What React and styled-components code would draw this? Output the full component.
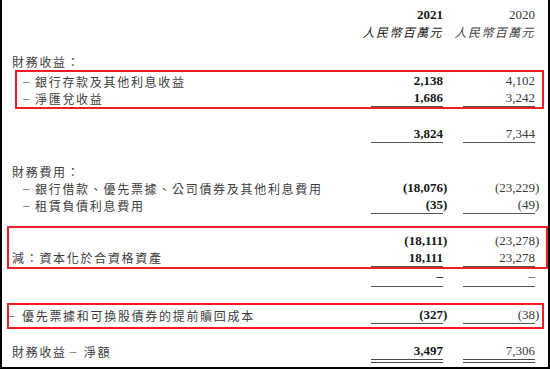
import React from 'react'
import styled, { createGlobalStyle } from 'styled-components'

const GlobalStyle = createGlobalStyle`
  body {
    margin: 0;
    background: #fff;
  }
`

const Page = styled.div`
  width: 550px;
  height: 369px;
  box-sizing: border-box;
  border: 2px solid #000;
  border-top: none;
  padding-top: 6px;
  background: #fff;
  overflow: hidden;
`

const Row = styled.div`
  display: grid;
  grid-template-columns: 1fr 72px 72px;
  column-gap: 20px;
  align-items: start;
  padding: 0 13px 0 ${p => p.$indent ?? 10}px;
  margin-top: ${p => p.$mt || 0}px;
  line-height: ${p => p.$h || 17}px;
`

const Label = styled.div`
  font-family: "Noto Sans CJK TC", sans-serif;
  font-size: 12px;
  letter-spacing: 1.7px;
  color: #3c3c3c;
  white-space: nowrap;
`

const Dash = styled.span`
  display: inline-block;
  width: ${p => p.$w || 13}px;
  padding-left: ${p => p.$pl || 0}px;
  box-sizing: border-box;
  vertical-align: 2px;
  font-family: "Liberation Serif", serif;
  font-size: 13px;
  letter-spacing: 0;
  color: #555;
`

const Cell = styled.div`
  display: flex;
  justify-content: flex-end;
  white-space: nowrap;
  font-family: "Liberation Serif", serif;
  font-size: 13px;
  font-weight: ${p => (p.$bold ? 700 : 400)};
  color: ${p => (p.$bold ? '#161616' : '#3a3a3a')};
  padding-bottom: ${p => p.$pb || 0}px;
  border-bottom: ${p =>
    p.$line === 'double' ? '4px double #4a4a4a' : p.$line ? '1px solid #555' : 'none'};
`

const Unit = styled.span`
  font-family: "Noto Sans CJK TC", sans-serif;
  font-size: 12px;
  font-style: italic;
  letter-spacing: 1.4px;
  color: ${p => (p.$bold ? '#1a1a1a' : '#444')};
`

const Value = styled.span`
  margin-right: ${p => (p.$paren ? '-4.3px' : '0')};
`

const Highlight = styled.div`
  position: relative;
  margin-top: ${p => p.$mt || 0}px;
  padding: ${p => p.$pt}px 0 ${p => p.$pb}px;

  &::after {
    content: '';
    position: absolute;
    top: 0;
    bottom: 0;
    left: ${p => p.$l}px;
    right: ${p => p.$r}px;
    border: 2px solid #f01d24;
    pointer-events: none;
  }
`

const Num = ({ v, bold, line, pb }) => (
  <Cell $bold={bold} $line={line} $pb={pb}>
    <Value $paren={v.startsWith('(')}>{v}</Value>
  </Cell>
)

const Figures = ({ a, b, line, pb }) => (
  <>
    <Num v={a} bold line={line} pb={pb} />
    <Num v={b} line={line} pb={pb} />
  </>
)

export default function App() {
  return (
    <>
      <GlobalStyle />
      <Page>
        <Row>
          <div />
          <Cell $bold>2021</Cell>
          <Cell>2020</Cell>
        </Row>
        <Row>
          <div />
          <Cell><Unit $bold>人民幣百萬元</Unit></Cell>
          <Cell><Unit>人民幣百萬元</Unit></Cell>
        </Row>

        <Row $mt={13}>
          <Label>財務收益：</Label>
        </Row>
        <Highlight $pt={2} $pb={2} $l={13} $r={4}>
          <Row $indent={20}>
            <Label><Dash $pl={1}>–</Dash>銀行存款及其他利息收益</Label>
            <Figures a="2,138" b="4,102" />
          </Row>
          <Row $indent={20} $h={16}>
            <Label><Dash $pl={1}>–</Dash>淨匯兌收益</Label>
            <Figures a="1,686" b="3,242" line />
          </Row>
        </Highlight>
        <Row $mt={16}>
          <div />
          <Figures a="3,824" b="7,344" line />
        </Row>

        <Row $mt={20}>
          <Label>財務費用：</Label>
        </Row>
        <Row $indent={20} $h={16}>
          <Label><Dash $pl={1}>–</Dash>銀行借款、優先票據、公司債券及其他利息費用</Label>
          <Figures a="(18,076)" b="(23,229)" />
        </Row>
        <Row $indent={20} $h={16}>
          <Label><Dash $pl={1}>–</Dash>租賃負債利息費用</Label>
          <Figures a="(35)" b="(49)" line />
        </Row>

        <Highlight $mt={12} $pt={6} $pb={2} $l={5} $r={0}>
          <Row>
            <div />
            <Figures a="(18,111)" b="(23,278)" />
          </Row>
          <Row>
            <Label>減：資本化於合資格資產</Label>
            <Figures a="18,111" b="23,278" line />
          </Row>
        </Highlight>
        <Row $h={13}>
          <div />
          <Figures a="–" b="–" line pb={4} />
        </Row>

        <Highlight $mt={16} $pt={3} $pb={5} $l={5} $r={4}>
          <Row $indent={6}>
            <Label><Dash $w={14}>–</Dash>優先票據和可換股債券的提前贖回成本</Label>
            <Figures a="(327)" b="(38)" line />
          </Row>
        </Highlight>

        <Row $mt={13}>
          <Label>財務收益<Dash $w={17} $pl={3}>–</Dash>淨額</Label>
          <Figures a="3,497" b="7,306" line="double" />
        </Row>
      </Page>
    </>
  )
}
